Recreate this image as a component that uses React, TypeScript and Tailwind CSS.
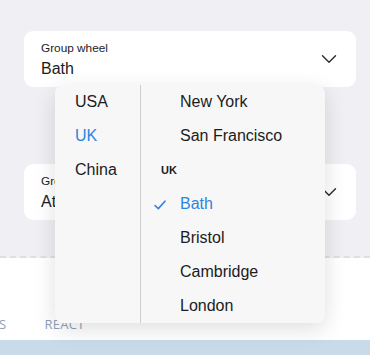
import React from "react";

const Chevron = () => (
  <svg width="16" height="10" viewBox="0 0 16 10" fill="none">
    <path d="M1.5 1.8 L8 8.2 L14.5 1.8" stroke="#2a2a2a" strokeWidth="1.4" strokeLinecap="round" strokeLinejoin="round" />
  </svg>
);

const Check = () => (
  <svg width="12" height="10" viewBox="0 0 12 10" fill="none">
    <path d="M1 5.5 L4.3 8.6 L11 1.2" stroke="#2b85e0" strokeWidth="1.6" strokeLinecap="round" strokeLinejoin="round" />
  </svg>
);

function Card({ label, value }: { label: string; value: string }) {
  return (
    <div className="ml-[24px] mr-[14px] h-[56px] bg-white rounded-[9px] flex items-center pl-[17px] pr-[19px]">
      <div className="flex-1 flex flex-col pt-[2px]">
        <span className="text-[11.8px] leading-[14px] text-[#1c1c1e]">{label}</span>
        <span className="text-[16px] leading-[20px] mt-[4px] text-[#1c1c1e]">{value}</span>
      </div>
      <Chevron />
    </div>
  );
}

export default function App() {
  const left = ["USA", "UK", "China"];
  return (
    <div className="w-[370px] h-[355px] overflow-hidden relative bg-white" style={{ fontFamily: '"Liberation Sans", Arial, sans-serif' }}>
      <div className="bg-[#efeff4] h-[258px] pt-[31px] border-b-2 border-dashed border-[#dedee3]">
        <Card label="Group wheel" value="Bath" />
        <div className="h-[77px]" />
        <Card label="Group wheel" value="Atlanta" />
      </div>
      <div className="h-[82px] relative overflow-hidden">
        <div className="absolute top-[58px] left-0 flex text-[13px] tracking-[0.3px] text-[#8fa2b6] leading-[16px]" style={{ fontFamily: '"Open Sans", sans-serif' }}>
          <span className="-ml-[1px]">S</span>
          <span className="ml-[38px]">REACT</span>
        </div>
      </div>
      <div className="h-[15px] bg-[#c9dbe8]" />

      <div className="absolute left-[55px] top-[85px] w-[270px] h-[238px] bg-[#f7f7f7] rounded-[8px] shadow-[0_6px_22px_rgba(0,0,0,0.13)] flex">
        <div className="w-[86px] border-r border-[#cfcfd2] flex flex-col">
          {left.map((l) => (
            <div key={l} className={`h-[34px] flex items-center pl-[20px] text-[16px] ${l === "UK" ? "text-[#2b85e0]" : "text-[#1c1c1e]"}`}>
              {l}
            </div>
          ))}
        </div>
        <div className="flex-1 flex flex-col">
          <div className="h-[34px] flex items-center pl-[39px] text-[16px] text-[#1c1c1e]">New York</div>
          <div className="h-[34px] flex items-center pl-[39px] text-[16px] text-[#1c1c1e]">San Francisco</div>
          <div className="h-[34px] flex items-center pl-[20px] text-[11px] font-bold text-[#1c1c1e]">UK</div>
          <div className="h-[34px] flex items-center text-[16px] text-[#2b85e0]">
            <span className="w-[39px] flex justify-start pl-[13px] pt-[2px]"><Check /></span>
            Bath
          </div>
          <div className="h-[34px] flex items-center pl-[39px] text-[16px] text-[#1c1c1e]">Bristol</div>
          <div className="h-[34px] flex items-center pl-[39px] text-[16px] text-[#1c1c1e]">Cambridge</div>
          <div className="h-[34px] flex items-center pl-[39px] text-[16px] text-[#1c1c1e]">London</div>
        </div>
      </div>
    </div>
  );
}
